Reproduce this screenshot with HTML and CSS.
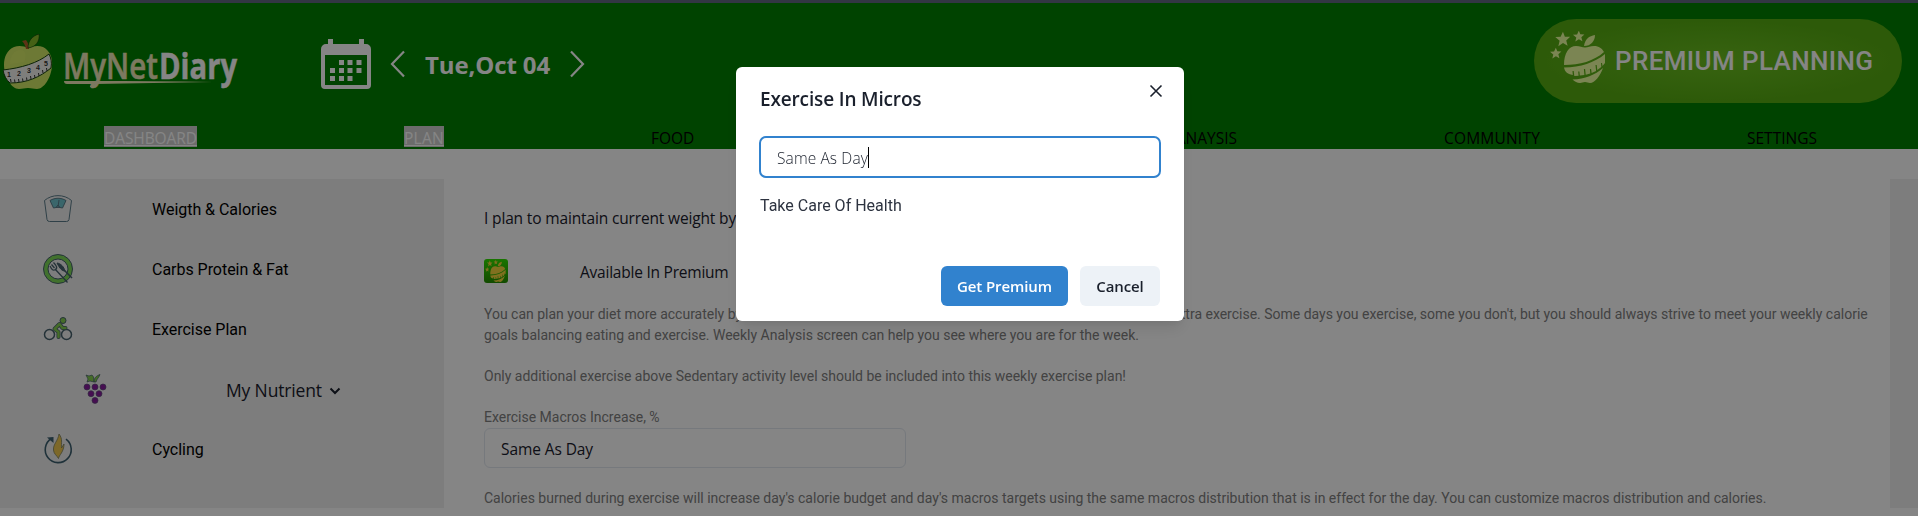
FILE: index.html
```html
<!DOCTYPE html>
<html lang="en">
<head>
<meta charset="utf-8">
<title>MyNetDiary</title>
<link rel="stylesheet" href="styles.css">
</head>
<body>
<svg class="defs" width="0" height="0">
  <symbol id="star" viewBox="0 0 20 20"><path d="M10.500 1l2.300 5.700 6.200.2-4.600 4.200 1.600 6.200-5.400-3.200-5.500 3.700 1.500-6.400L1.500 7.200l6.300-.4z"/></symbol>
  <symbol id="premium-apple" viewBox="0 0 56 52">
    <use href="#star" x="4" y="0" width="17" height="17"/>
    <use href="#star" x="22" y="-1" width="13" height="13"/>
    <use href="#star" x="-1" y="16" width="13" height="13"/>
    <path d="M34 15C35 8 39 5 45 4 45 10 41 15 34 15z"/>
    <path d="M14 34C14 22 19 15 26 15c4 0 6 1.500 9 1.500S40 15 44 15c5 0 8 2.500 10 6C44 30 30 34 14 34z"/>
    <path d="M14 36.500C31 36 44 32 55 23v9l-2.500 3-.5-3h-1l.3 4-4 3-.6-5h-1.200l.6 6-4.500 2-.5-4h-1.200l.4 4.500-4.600 1.200-.6-5.700h-1.200l.5 6-4.600.5-.4-4h-1.200l.4 4.300-4.300.2-.6-5h-1.200l.3 4C17 43 15 41 14 36.500z"/>
    <path d="M22.500 48.500C35 48 45 44 53 37c-3 8-8 15-13 15-2 0-3-1-5-1s-3 1-5 1c-3 0-5-1.500-7.500-3.500z"/>
  </symbol>
</svg>

<div class="strip"></div>
<header class="header">
  <div class="top">
    <svg class="apple" width="50" height="56" viewBox="0 0 50 56">
      <path fill="#d2e866" d="M25 14c-4-2-9-3-14-1C4 16 1 23 1 31c0 11 7 24 15 24 4 0 5-1 9-1s5 1 9 1c7 0 14-11 15-23 1-9-3-16-9-19-5-2-10-1-15 1z"/>
      <path fill="#e0f070" opacity=".35" d="M7 30c0-8 4-14 10-14s7 6 4 12z"/>
      <path fill="#b0622a" d="M19 7l4-1c2 3 3 5 3 9h-3c-1-4-2-6-4-8z"/>
      <path fill="#86ba2a" stroke="#123c08" stroke-width=".6" d="M25 14C25 7 29 2 36 0c1 7-3 13-11 14z"/>
      <path fill="#f2f2ee" stroke="#16430c" stroke-width="1" d="M0 36C18 34 35 29 46 20c2 4 3 8 2 14C37 43 24 49 7 49 3 46 1 41 0 36z"/>
      <path fill="none" stroke="#333" stroke-width="1" d="M8 48l-.5-3M12 48.500l-.5-3M16 48l-.5-3M20 47.500l-.5-3M24 46.500l-.5-3M28 45l-.5-3M32 44l-.5-3M36 42l-.5-3M40 39l-.5-3M44 37l-.5-3"/>
      <g class="tape"><text x="4" y="43">1</text><text x="14" y="42">2</text><text x="24" y="39">3</text><text x="33" y="36">4</text><text x="41" y="32">5</text></g>
    </svg>
    <svg class="wordmark" width="178" height="40" viewBox="0 0 178 40">
      <text x="0" y="28" textLength="95" lengthAdjust="spacingAndGlyphs" class="wm-a">MyNet</text>
      <text x="96" y="28" textLength="78" lengthAdjust="spacingAndGlyphs" class="wm-b">Diary</text>
      <path fill="#efe9b8" d="M1 30H30C70 30 110 30 150 31 110 32 70 32 32 33 27 38 25 36 29 33H4C2 33 1 32 1 30z"/>
    </svg>
    <svg class="calendar" width="50" height="50" viewBox="0 0 50 50" fill="#fff">
      <path fill-rule="evenodd" d="M7 0h5v5h26V0h5v5h2a5 5 0 0 1 5 5v36a4 4 0 0 1-4 4H4a4 4 0 0 1-4-4V10a5 5 0 0 1 5-5h2zM4 16v30h42V16z"/>
      <path d="M18 21h5v5h-5zM26.500 21h5v5h-5zM35.500 21h5v5h-5zM9 29h5v5H9zM18 29h5v5h-5zM26.500 29h5v5h-5zM35.500 29h5v5h-5zM9 37h5v5H9zM18 37h5v5h-5zM26.500 37h5v5h-5z"/>
    </svg>
    <svg class="prev" width="16" height="28" viewBox="0 0 16 28"><path d="M14 1.500L2 14l12 12.500"/></svg>
    <span class="date">Tue,Oct 04</span>
    <svg class="next" width="16" height="28" viewBox="0 0 16 28"><path d="M2 1.500L14 14 2 26.500"/></svg>
    <div class="premium">
      <svg width="56" height="52" fill="#ebffa0"><use href="#premium-apple"/></svg>
      <span class="premium-text">PREMIUM PLANNING</span>
    </div>
  </div>
  <nav class="nav">
    <a class="sel n1">DASHBOARD</a>
    <a class="sel n2">PLAN</a>
    <a class="n3">FOOD</a>
    <a class="n4">ANAYSIS</a>
    <a class="n5">COMMUNITY</a>
    <a class="n6">SETTINGS</a>
  </nav>
</header>

<div class="page">
  <aside class="sidebar">
    <div class="item">
      <svg width="30" height="30" viewBox="0 0 30 30" fill="none" stroke="#5b7c8a" stroke-width="1">
        <path d="M1.500 6.500C9 0 21 0 28.500 6.500L26 25.500a2.500 2.500 0 0 1-2.500 2H6.500a2.500 2.500 0 0 1-2.500-2z"/>
        <path fill="#6fc3cd" d="M7 6.500c5-3 11-3 16 0l-3.500 7.500c-3-.8-6-.8-9 0z"/><path d="M15 13l1-7M15 11l-2.500 3M15 11l2.500 3"/>
      </svg><span class="it">Weigth &amp; Calories</span>
    </div>
    <div class="item">
      <svg width="30" height="30" viewBox="0 0 30 30" fill="none" stroke="#46606c">
        <circle cx="15" cy="15" r="12.200" stroke="#7ed957" stroke-width="4.500"/><circle cx="15" cy="15" r="14.500"/><circle cx="15" cy="15" r="10"/>
        <path d="M12 15l12.500 13.500M7 12c2 4 3 5 5.500 3.500S13 11 10.500 8.500M8.500 10.500l3 3.500" stroke-width="1.300"/>
        <path fill="#46606c" d="M14 9c4 .5 7 4 8 8-3 0-5-2-8-8z"/><path stroke-width="1.600" d="M21 16l8 8"/>
      </svg><span class="it">Carbs Protein &amp; Fat</span>
    </div>
    <div class="item">
      <svg width="30" height="30" viewBox="0 0 30 30" fill="none" stroke="#46606c">
        <circle cx="6.500" cy="20.500" r="5" stroke-width="1.500"/><circle cx="23.500" cy="20.500" r="5" stroke-width="1.500"/>
        <path stroke-width="4" stroke-linejoin="round" stroke-linecap="round" d="M15.500 23v-5l-4-3 5-5 3 4h3"/>
        <path stroke="#85cf50" stroke-width="2.500" stroke-linejoin="round" stroke-linecap="round" d="M15.500 23v-5l-4-3 5-5 3 4h3"/>
        <circle cx="20" cy="6.500" r="3" fill="#85cf50"/>
      </svg><span class="it">Exercise Plan</span>
    </div>
    <div class="item nutrient">
      <svg width="30" height="30" viewBox="0 0 30 30" fill="#861c9c" stroke="#5b4f7a" stroke-width=".7">
        <path fill="#85cf50" stroke="#46606c" d="M6 1l3 1 3-1 1.500 2 .5 5-4-1-3 1 1-3zM14 8c0-4 2-6 6-7.500-1 3-3 4-4 7.500z"/>
        <circle cx="7" cy="13" r="3"/><circle cx="15" cy="13" r="3"/><circle cx="23" cy="13" r="3"/><circle cx="11" cy="19.700" r="3"/><circle cx="19" cy="19.700" r="3"/><circle cx="15" cy="26.400" r="3"/>
      </svg><span class="nt">My Nutrient</span>
      <svg class="caret-down" width="12" height="8" viewBox="0 0 12 8"><path d="M1.500 1.500L6 6l4.500-4.500"/></svg>
    </div>
    <div class="item">
      <svg width="30" height="30" viewBox="0 0 30 30" fill="none" stroke="#3d6070" stroke-width="1.600">
        <path d="M8.500 4.500A13 13 0 1 0 23 5.200"/><path fill="#3d6070" stroke="none" d="M4 3.500l6.500-.5v6z"/>
        <path fill="#f0c850" stroke-width=".8" stroke="#7c8060" d="M16 0c-1 7-6 10-5.500 16 .3 4 3 5 5 8.500C16 21 21 18 21 10l-2.500 4C18 9 20 5 16 0z"/>
      </svg><span class="it">Cycling</span>
    </div>
  </aside>
  <main class="main">
    <p class="lead">I plan to maintain current weight by</p>
    <div class="avail">
      <svg width="24" height="24" viewBox="0 0 24 24"><rect width="24" height="24" rx="3" fill="url(#g)"/><defs><linearGradient id="g" x2="0" y2="1"><stop stop-color="#30e000"/><stop offset="1" stop-color="#249000"/></linearGradient></defs><svg x="1" y="1" width="21" height="22" viewBox="0 0 56 52" preserveAspectRatio="none" fill="#f5d63c"><use href="#premium-apple" width="56" height="52"/></svg></svg>
      <span class="av">Available In Premium</span>
    </div>
    <p class="copy"><span class="c1">You can plan your diet more accurately by</span><span class="c2">extra exercise. Some days you exercise, some you don't, but you should always strive to meet your weekly calorie</span><br>goals balancing eating and exercise. Weekly Analysis screen can help you see where you are for the week.</p>
    <p class="copy">Only additional exercise above Sedentary activity level should be included into this weekly exercise plan!</p>
    <p class="copy">Exercise Macros Increase, %</p>
    <div class="field">Same As Day</div>
    <p class="copy">Calories burned during exercise will increase day's calorie budget and day's macros targets using the same macros distribution that is in effect for the day. You can customize macros distribution and calories.</p>
  </main>
  <div class="rail"></div>
</div>

<div class="overlay">
  <section class="modal">
    <div class="modal-head"><h2>Exercise In Micros</h2>
      <svg width="14" height="14" viewBox="0 0 14 14"><path d="M1.500 1.500l11 11M12.500 1.500l-11 11"/></svg></div>
    <div class="modal-field"><span>Same As Day</span><i class="cursor"></i></div>
    <p class="care">Take Care Of Health</p>
    <div class="actions"><button class="btn primary">Get Premium</button><button class="btn">Cancel</button></div>
  </section>
</div>
</body>
</html>
```
FILE: styles.css
```css
* { box-sizing: border-box; }
body { margin: 0; width: 1918px; height: 516px; overflow: hidden; background: #fff; color: #1a202c; font-family: "Open Sans", "Noto Sans", sans-serif; font-size: 15.5px; }
p, h2 { margin: 0; }
svg { flex: none; display: block; }
span, a { white-space: nowrap; }
.defs { position: absolute; }
.strip { height: 3px; background: #606980; }
.header { height: 146px; background: #008000; display: flex; flex-direction: column; }
.top { height: 123px; display: flex; align-items: flex-start; }
.apple { margin: 31px 0 0 3px; }
.tape { font: bold 7px "Liberation Sans", sans-serif; fill: #333; }
.wordmark { margin: 48px 0 0 10px; overflow: visible; }
.wm-a, .wm-b { font-family: "Open Sans", sans-serif; font-size: 36px; font-weight: 600; fill: #efe9b8; stroke: #efe9b8; stroke-width: .5px; }
.wm-b { font-weight: 700; fill: #fff; stroke: #fff; }
.calendar { margin: 36px 0 0 80px; }
.prev, .next { fill: none; stroke: #fff; stroke-width: 2.2; margin-top: 47px; }
.prev { margin-left: 19px; }
.date { font-size: 24px; font-weight: 700; letter-spacing: -.12px; line-height: 36px; color: #fff; margin: 44px 0 0 19px; }
.next { margin-left: 19px; }
.premium { margin: 16px 16px 0 auto; width: 368px; height: 84px; border-radius: 42px; background: radial-gradient(ellipse at center, #6cc020 0, #56ac12 70%); display: flex; padding: 12px 0 0 16px; color: #fff; }
.premium-text { font: 500 26px/60px Roboto, sans-serif; letter-spacing: .37px; margin-left: 9px; }
.nav { height: 21px; line-height: 24px; display: flex; color: #000; padding-left: 104px; }
.sel { color: #fff; background: #d0d0d0; text-decoration: underline; }
.n1 { width: 93px; letter-spacing: -.08px; }
.n2 { width: 40px; margin-left: 207px; letter-spacing: .25px; }
.n3 { width: 43px; margin-left: 207px; }
.n4 { width: 66px; margin-left: 477px; text-align: right; }
.n5 { width: 97px; margin-left: 207px; letter-spacing: .2px; }
.n6 { margin-left: 206px; }
.page { display: flex; height: 329px; margin-top: 30px; }
.sidebar { width: 444px; background: #f0f0f0; }
.item { height: 60px; display: flex; align-items: center; padding-left: 43px; color: #000; font: 16px Roboto, sans-serif; letter-spacing: -.03px; }
.it { margin-left: 79px; }
.nutrient { padding-left: 80px; font: 17.5px "Open Sans", sans-serif; letter-spacing: -.15px; color: #1a202c; }
.nt { margin-left: 116px; margin-top: 2px; }
.caret-down { fill: none; stroke: #1a202c; stroke-width: 2; margin: 3px 0 0 7px; }
.main { flex: 1; min-width: 0; padding: 26px 0 0 40px; }
.lead { line-height: 24px; padding-top: 1px; height: 24px; letter-spacing: -.15px; }
.avail { margin-top: 30px; display: flex; line-height: 26px; height: 24px; letter-spacing: -.23px; }
.av { margin-left: 72px; }
.copy { font: 14px/21px Roboto, sans-serif; letter-spacing: -.006px; color: #808080; margin-top: 20px; white-space: nowrap; position: relative; top: 1px; }
.c1 { display: inline-block; width: 687px; vertical-align: top; }
.field { width: 422px; height: 40px; margin-top: 1px; margin-bottom: -1px; border: 1px solid #e2e8f0; border-radius: 6px; padding-left: 16px; line-height: 40px; letter-spacing: -.09px; }
.rail { width: 28px; background: #f0f0f0; }
.overlay { position: fixed; inset: 0; background: rgba(0, 0, 0, .48); padding-top: 67px; }
.modal { width: 448px; height: 254px; margin-left: 736px; background: #fff; border-radius: 6px; box-shadow: 0 10px 15px -3px rgba(0,0,0,.1), 0 4px 6px -2px rgba(0,0,0,.05); padding: 0 24px; }
.modal-head { display: flex; justify-content: space-between; height: 70px; }
.modal-head h2 { font: 600 19px/30px "Open Sans", sans-serif; letter-spacing: -.15px; padding-top: 17px; }
.modal-head svg { margin: 17px -3px 0 0; stroke: #1a202c; stroke-width: 1.6; }
.modal-field { margin: -1px; height: 42px; border: 2px solid #3182ce; border-radius: 7px; display: flex; align-items: center; padding: 1px 0 0 16px; font-weight: 300; letter-spacing: .11px; }
.cursor { width: 1px; height: 21px; background: #000; }
.care { font: 16px/24px Roboto, sans-serif; color: #2d3340; margin-top: 17px; }
.actions { display: flex; justify-content: flex-end; gap: 12px; margin-top: 48px; }
.btn { height: 40px; width: 80px; padding: 0; border: 0; border-radius: 6px; background: #edf2f7; color: #1a202c; font: 600 15px "Open Sans", sans-serif; letter-spacing: -.1px; }
.primary { width: 127px; background: #3182ce; color: #fff; }
```
